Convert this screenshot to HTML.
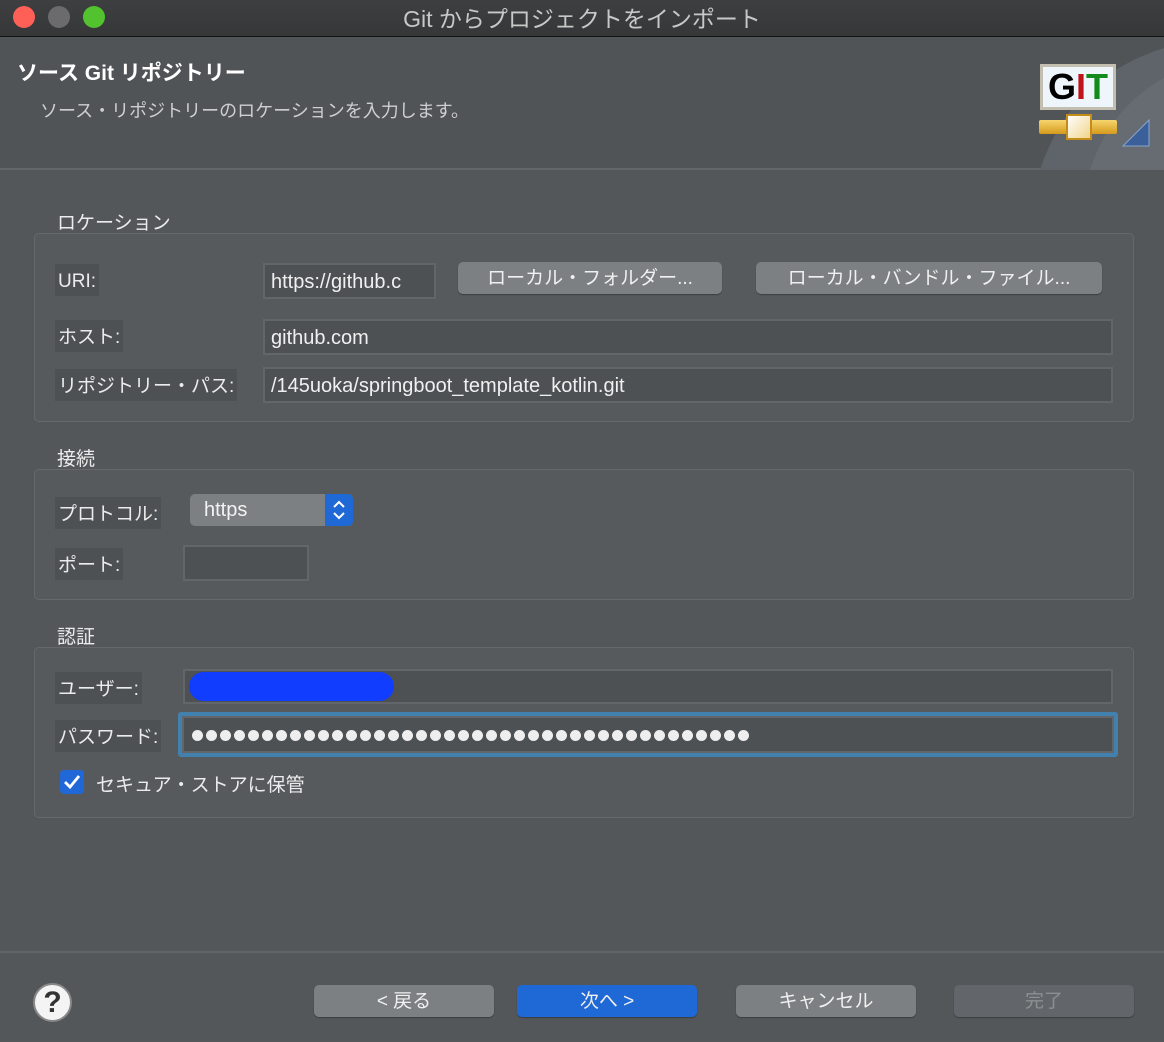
<!DOCTYPE html>
<html><head><meta charset="utf-8"><style>
*{box-sizing:border-box;margin:0;padding:0}
body{width:1164px;height:1042px;background:#53575a;font-family:"Liberation Sans","Noto Sans CJK JP",sans-serif;color:#e6e6e6;position:relative;overflow:hidden}
.a{position:absolute}
.tb{left:0;top:0;width:1164px;height:37px;background:linear-gradient(#3e3f40,#363738);border-bottom:1px solid #111}
.dot{top:6px;width:22px;height:22px;border-radius:50%}
.hdr{left:0;top:38px;width:1164px;height:132px;background:#505457;border-bottom:2px solid #626668}
.grp{border:1px solid #65696c;border-radius:5px;background:#565a5d}
.lbl{background:#4d5154;font-size:19px;padding:3px 3px 0;height:32px;line-height:30px;color:#ececec}
.inp{background:#4d5154;border:2px solid #62666a;font-size:20px;line-height:34px;padding-left:6px;color:#f0f0f0;white-space:nowrap;overflow:hidden}
.btn{background:#7c8082;border-radius:5px;font-size:19px;text-align:center;color:#f0f0f0;box-shadow:0 1px 1px rgba(0,0,0,.3);line-height:34px!important}
.gt{font-size:19px;color:#ececec}
.pw{display:flex;padding-left:8px;padding-top:12px}
.pw i{display:block;width:11px;height:11px;border-radius:50%;background:#eee;margin-right:3px}
</style></head><body>
<div class="a tb"></div>
<div class="a dot" style="left:13px;background:#fe5f57"></div>
<div class="a dot" style="left:48px;background:#6b6b6d"></div>
<div class="a dot" style="left:83px;background:#52c22f"></div>
<div class="a" style="left:0;width:1164px;top:0px;text-align:center;font-size:23px;color:#c8c8c8">Git からプロジェクトをインポート</div>
<div class="a hdr"></div>
<svg class="a" style="left:1010px;top:38px" width="154" height="132"><path d="M30 132 Q60 40 154 10 L154 132Z" fill="#5e6469"/><path d="M80 132 Q100 70 154 40 L154 132Z" fill="#666c72"/></svg>
<div class="a" style="left:17px;top:57px;font-size:21px;font-weight:bold;color:#fff">ソース Git リポジトリー</div>
<div class="a" style="left:40px;top:97px;font-size:18px;color:#cfcfcf">ソース・リポジトリーのロケーションを入力します。</div>
<div class="a" style="left:1040px;top:64px;width:76px;height:46px;background:#eef6fb;border:3px solid #c2bfb0;font:bold 36px 'Liberation Sans',sans-serif;text-align:center;line-height:40px"><span style="color:#000">G</span><span style="color:#c0141c">I</span><span style="color:#138a1c">T</span></div>
<div class="a" style="left:1039px;top:120px;width:78px;height:14px;background:linear-gradient(#f7d670,#d49a1c);border-radius:2px"></div>
<div class="a" style="left:1066px;top:114px;width:26px;height:26px;background:linear-gradient(135deg,#fff,#f1d48a);border:2px solid #c48d1a"></div>
<svg class="a" style="left:1120px;top:118px" width="32" height="30"><path d="M3 28 L29 28 L29 2Z" fill="#3a5f99" stroke="#8aa4cc"/></svg>

<div class="a gt" style="left:57px;top:208px">ロケーション</div>
<div class="a grp" style="left:34px;top:233px;width:1100px;height:189px"></div>
<div class="a lbl" style="left:55px;top:264px">URI:</div>
<div class="a inp" style="left:263px;top:263px;width:173px;height:36px">https://github.c</div>
<div class="a btn" style="left:458px;top:262px;width:264px;height:32px">ローカル・フォルダー...</div>
<div class="a btn" style="left:756px;top:262px;width:346px;height:32px">ローカル・バンドル・ファイル...</div>
<div class="a lbl" style="left:55px;top:320px">ホスト:</div>
<div class="a inp" style="left:263px;top:319px;width:850px;height:36px">github.com</div>
<div class="a lbl" style="left:55px;top:369px">リポジトリー・パス:</div>
<div class="a inp" style="left:263px;top:367px;width:850px;height:36px">/145uoka/springboot_template_kotlin.git</div>

<div class="a gt" style="left:57px;top:444px">接続</div>
<div class="a grp" style="left:34px;top:469px;width:1100px;height:131px"></div>
<div class="a lbl" style="left:55px;top:497px">プロトコル:</div>
<div class="a" style="left:190px;top:494px;width:163px;height:32px;background:#7c8082;border-radius:5px;font-size:20px;line-height:33px;padding-left:14px;color:#f3f3f3;overflow:hidden">https<div class="a" style="right:0;top:0;width:28px;height:32px;background:#1f69d6"><svg width="28" height="32"><path d="M9 13 L14 8 L19 13 M9 19 L14 24 L19 19" stroke="#fff" stroke-width="2" fill="none"/></svg></div></div>
<div class="a lbl" style="left:55px;top:548px">ポート:</div>
<div class="a inp" style="left:183px;top:545px;width:126px;height:36px"></div>

<div class="a gt" style="left:57px;top:622px">認証</div>
<div class="a grp" style="left:34px;top:647px;width:1100px;height:171px"></div>
<div class="a lbl" style="left:55px;top:672px">ユーザー:</div>
<div class="a inp" style="left:183px;top:669px;width:930px;height:35px"></div>
<div class="a" style="left:189px;top:672px;width:205px;height:29px;background:#113dfe;border-radius:15px"></div>
<div class="a lbl" style="left:55px;top:720px">パスワード:</div>
<div class="a" style="left:178px;top:712px;width:940px;height:45px;border:4px solid #4280ae;border-radius:3px;background:#4d5154"><div class="pw" style="border:2px solid #62666a;height:37px"><i></i><i></i><i></i><i></i><i></i><i></i><i></i><i></i><i></i><i></i><i></i><i></i><i></i><i></i><i></i><i></i><i></i><i></i><i></i><i></i><i></i><i></i><i></i><i></i><i></i><i></i><i></i><i></i><i></i><i></i><i></i><i></i><i></i><i></i><i></i><i></i><i></i><i></i><i></i><i></i></div></div>
<div class="a" style="left:60px;top:770px;width:24px;height:24px;background:#2068d8;border-radius:4px"><svg width="24" height="24"><path d="M5 12 L10 17 L19 6" stroke="#fff" stroke-width="2.8" fill="none"/></svg></div>
<div class="a gt" style="left:96px;top:770px">セキュア・ストアに保管</div>

<div class="a" style="left:0;top:951px;width:1164px;height:2px;background:#616567"></div>
<div class="a" style="left:33px;top:983px;width:39px;height:39px;border-radius:50%;background:#f4f4f4;border:2px solid #888;text-align:center;font:bold 30px/35px 'Liberation Sans',sans-serif;color:#333">?</div>
<div class="a btn" style="left:314px;top:985px;width:180px;height:32px">&lt; 戻る</div>
<div class="a btn" style="left:517px;top:985px;width:180px;height:32px;background:#1f69d6">次へ &gt;</div>
<div class="a btn" style="left:736px;top:985px;width:180px;height:32px">キャンセル</div>
<div class="a btn" style="left:954px;top:985px;width:180px;height:32px;background:#62666a;color:#8c9092">完了</div>
</body></html>
